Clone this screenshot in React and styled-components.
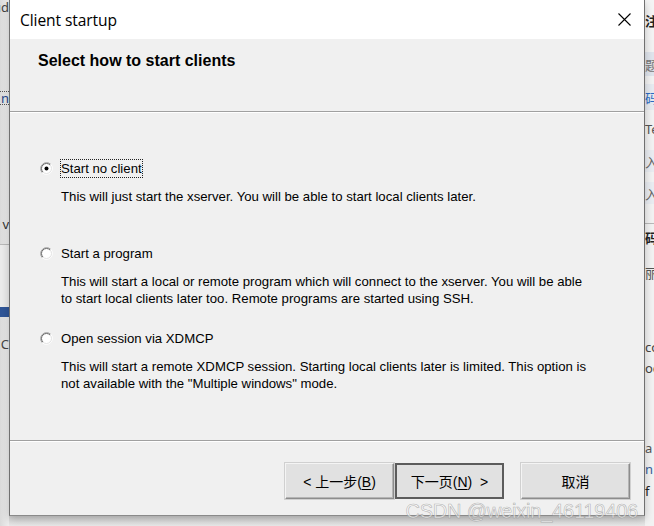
import React from "react";
import styled, { createGlobalStyle } from "styled-components";

const GlobalStyle = createGlobalStyle`
  html, body {
    margin: 0;
    padding: 0;
    background: #e4e4e4;
  }
  #root {
    width: 654px;
    height: 526px;
  }
`;

const Page = styled.div`
  position: relative;
  width: 654px;
  height: 526px;
  overflow: hidden;
  display: grid;
  grid-template-columns: 9px 636px 9px;
  grid-template-rows: 516px 10px;
  font-family: "Liberation Sans", Arial, sans-serif;
`;

const Strip = styled.div`
  grid-row: 1 / 3;
  display: flex;
  flex-direction: column;
  overflow: hidden;
  background: ${(p) => p.bg};
`;

const Fragment = styled.div`
  flex: 0 0 ${(p) => p.h}px;
  display: flex;
  align-items: center;
  justify-content: ${(p) => (p.side === "left" ? "flex-end" : "flex-start")};
  overflow: hidden;
  white-space: nowrap;
  font-family: "Noto Sans", "Noto Sans CJK SC", sans-serif;
  font-size: 13px;
  font-weight: ${(p) => (p.bold ? 700 : 400)};
  color: ${(p) => p.color || "#333"};
  background: ${(p) => p.bg || "transparent"};
  border-top: ${(p) => (p.dotted ? "1px dotted #555" : "none")};
  border-bottom: ${(p) => (p.line ? "1px solid #b9b9b9" : p.dotted ? "1px dotted #555" : "none")};
  box-sizing: border-box;
`;

const Shadow = styled.div`
  grid-column: 2;
  grid-row: 2;
  background: linear-gradient(#d2d2d2, #e8e8e8);
`;

const Dialog = styled.div`
  grid-column: 2;
  grid-row: 1;
  display: flex;
  flex-direction: column;
  background: #f0f0f0;
  border-left: 1px solid #707070;
  border-right: 1px solid #707070;
  border-bottom: 1px solid #8a8a8a;
  box-sizing: border-box;
  box-shadow: 0 3px 8px rgba(0, 0, 0, 0.22);
  z-index: 1;
`;

const TitleBar = styled.div`
  flex: 0 0 39px;
  display: flex;
  align-items: center;
  justify-content: space-between;
  padding: 0 12px 0 10px;
  background: #ffffff;
`;

const Title = styled.span`
  font-family: "Open Sans", "Noto Sans", sans-serif;
  font-size: 15.6px;
  color: #000;
  letter-spacing: -0.1px;
`;

const CloseButton = styled.span`
  display: flex;
  width: 16px;
  height: 16px;
  align-items: center;
  justify-content: center;
`;

const Header = styled.div`
  flex: 0 0 72px;
  box-sizing: border-box;
  padding: 13px 0 0 28px;
  font-size: 16px;
  font-weight: 700;
  color: #000;
`;

const Separator = styled.div`
  flex: 0 0 2px;
  border-top: 1px solid #a0a0a0;
  border-bottom: 1px solid #ffffff;
  box-sizing: border-box;
`;

const Options = styled.div`
  flex: 0 0 327px;
  display: grid;
  grid-auto-rows: 85px;
  padding: 46px 0 0 30px;
  box-sizing: border-box;
`;

const Option = styled.div`
  display: flex;
  flex-direction: column;
`;

const RadioRow = styled.label`
  display: flex;
  align-items: center;
  height: 18px;
  gap: 8px;
  font-size: 13.2px;
  color: #000;
`;

const RadioLabel = styled.span`
  padding: 1px 0;
  outline: ${(p) => (p.focused ? "1px dotted #222" : "none")};
  outline-offset: 0;
  line-height: 15px;
`;

const Description = styled.p`
  margin: 11px 0 0 21px;
  font-size: 13.2px;
  line-height: 17px;
  color: #000;
  white-space: nowrap;
`;

const Footer = styled.div`
  flex: 1;
  display: flex;
  justify-content: flex-end;
  align-items: flex-start;
  padding: 21px 14px 0 0;
  box-sizing: border-box;
`;

const ButtonGroup = styled.div`
  display: flex;
  gap: 1px;
  margin-right: 17px;
`;

const Button = styled.button`
  width: 109px;
  height: 36px;
  padding: 0;
  background: #e1e1e1;
  border-style: solid;
  border-width: ${(p) => (p.primary ? "2px" : "1px")};
  border-color: ${(p) =>
    p.primary ? "#5c5c5c" : "#f4f4f4 #8c8c8c #8c8c8c #f4f4f4"};
  box-shadow: ${(p) => (p.primary ? "none" : "inset -1px -1px 0 #b4b4b4, 0 0 0 1px #d0d0d0")};
  font-family: "Liberation Sans", "Noto Sans CJK SC", sans-serif;
  font-size: 14px;
  color: #000;
  text-align: center;
  white-space: pre;
`;

const Key = styled.span`
  text-decoration: underline;
  text-underline-offset: 2px;
`;

const Watermark = styled.div`
  position: absolute;
  right: 16px;
  bottom: 3px;
  font-family: "Liberation Sans", Arial, sans-serif;
  font-size: 20px;
  color: rgba(255, 255, 255, 0.6);
  -webkit-text-stroke: 0.6px rgba(140, 140, 140, 0.65);
  z-index: 2;
  letter-spacing: -0.2px;
`;

const Radio = ({ checked }) => (
  <svg width="13" height="13" viewBox="0 0 13 13">
    <circle cx="6.5" cy="6.5" r="5.5" fill="#fff" />
    <path d="M2.26 10.74 A6 6 0 0 1 10.74 2.26" fill="none" stroke="#a0a0a0" />
    <path d="M10.74 2.26 A6 6 0 0 1 2.26 10.74" fill="none" stroke="#fff" />
    <path d="M2.96 10.04 A5 5 0 0 1 10.04 2.96" fill="none" stroke="#6a6a6a" />
    <path d="M10.04 2.96 A5 5 0 0 1 2.96 10.04" fill="none" stroke="#e3e3e3" />
    {checked && <circle cx="6.5" cy="6.5" r="2" fill="#000" />}
  </svg>
);

const leftFragments = [
  { h: 14, text: "ud", color: "#444" },
  { h: 77 },
  { h: 14, text: "n", color: "#26458a", dotted: true },
  { h: 108 },
  { h: 22, text: "v", color: "#333" },
  { h: 10, line: true },
  { h: 62, bg: "#ebebeb" },
  { h: 10, bg: "#2f5597" },
  { h: 18 },
  { h: 18, text: "C", color: "#444" },
];

const rightFragments = [
  { h: 40, text: "注", bold: true, color: "#222", bg: "#f4f4f4" },
  { h: 12 },
  { h: 24, text: "题", color: "#777", bg: "#dfe4ec" },
  { h: 8 },
  { h: 26, text: "码", color: "#2b6cc4", bg: "#e6eaf0" },
  { h: 8 },
  { h: 22, text: "Te", color: "#555" },
  { h: 10 },
  { h: 22, text: "入", color: "#666", bg: "#e9ecf1" },
  { h: 10 },
  { h: 22, text: "入", color: "#666", bg: "#e9ecf1" },
  { h: 20, line: true },
  { h: 26, text: "码", bold: true, color: "#222" },
  { h: 10 },
  { h: 24, text: "丽", color: "#555" },
  { h: 52 },
  { h: 22, text: "co", color: "#444" },
  { h: 20, text: "oc", color: "#444" },
  { h: 60 },
  { h: 20, text: "a", color: "#555" },
  { h: 22, text: "n", color: "#3a5f9c" },
  { h: 22, text: "f", color: "#222" },
];

const options = [
  {
    label: "Start no client",
    checked: true,
    lines: ["This will just start the xserver. You will be able to start local clients later."],
  },
  {
    label: "Start a program",
    lines: [
      "This will start a local or remote program which will connect to the xserver. You will be able",
      "to start local clients later too. Remote programs are started using SSH.",
    ],
  },
  {
    label: "Open session via XDMCP",
    lines: [
      "This will start a remote XDMCP session. Starting local clients later is limited. This option is",
      'not available with the "Multiple windows" mode.',
    ],
  },
];

const App = () => (
  <>
    <GlobalStyle />
    <Page>
      <Strip bg="linear-gradient(90deg, #dadada, #eeeeee)">
        {leftFragments.map((f, i) => (
          <Fragment key={i} side="left" {...f}>
            {f.text}
          </Fragment>
        ))}
      </Strip>
      <Dialog>
        <TitleBar>
          <Title>Client startup</Title>
          <CloseButton>
            <svg width="13" height="13" viewBox="0 0 13 13">
              <path d="M0.5 0.5 L12.5 12.5 M12.5 0.5 L0.5 12.5" stroke="#000" strokeWidth="1.1" />
            </svg>
          </CloseButton>
        </TitleBar>
        <Header>Select how to start clients</Header>
        <Separator />
        <Options>
          {options.map((o) => (
            <Option key={o.label}>
              <RadioRow>
                <Radio checked={o.checked} />
                <RadioLabel focused={o.checked}>{o.label}</RadioLabel>
              </RadioRow>
              <Description>
                {o.lines.map((l, i) => (
                  <React.Fragment key={i}>
                    {i > 0 && <br />}
                    {l}
                  </React.Fragment>
                ))}
              </Description>
            </Option>
          ))}
        </Options>
        <Separator />
        <Footer>
          <ButtonGroup>
            <Button>
              {"< 上一步("}<Key>B</Key>{")"}
            </Button>
            <Button primary>
              {"下一页("}<Key>N</Key>{")  >"}
            </Button>
          </ButtonGroup>
          <Button>取消</Button>
        </Footer>
      </Dialog>
      <Shadow />
      <Strip bg="#f2f2f2">
        {rightFragments.map((f, i) => (
          <Fragment key={i} side="right" {...f}>
            {f.text}
          </Fragment>
        ))}
      </Strip>
      <Watermark>CSDN @weixin_46119406</Watermark>
    </Page>
  </>
);

export default App;
